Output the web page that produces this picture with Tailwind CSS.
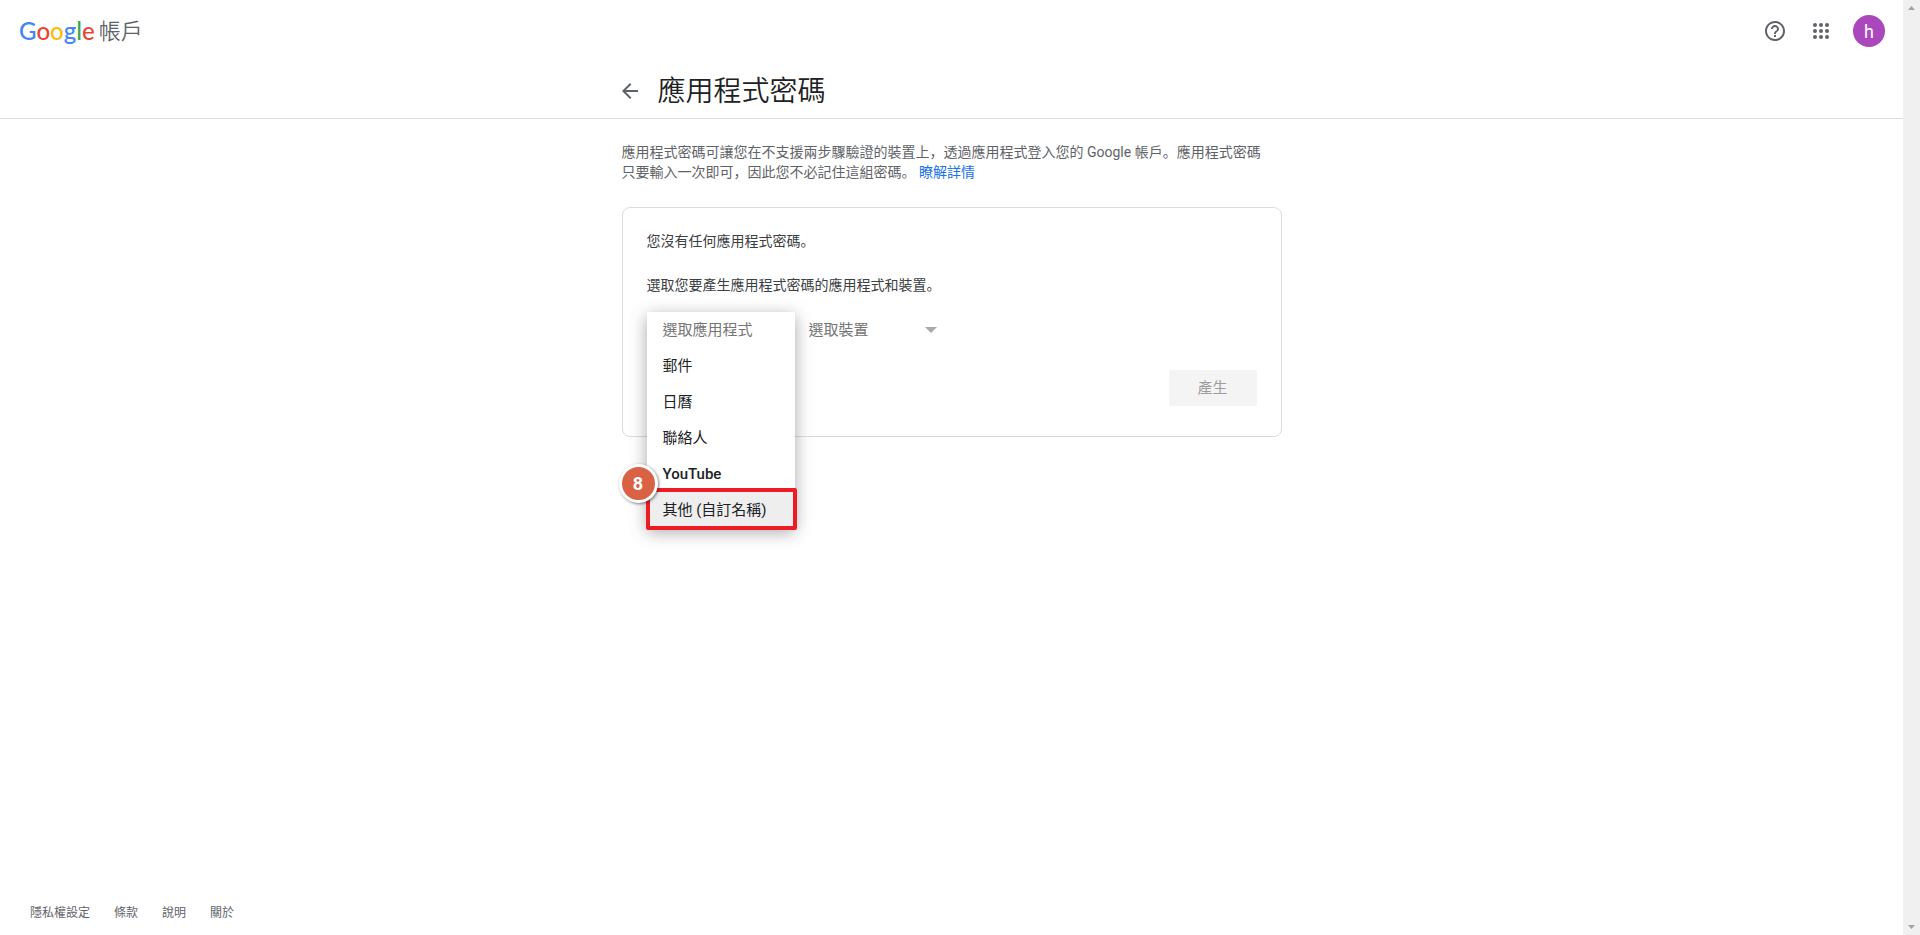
<!DOCTYPE html>
<html lang="zh-Hant">
<head>
  <meta charset="UTF-8" />
  <meta name="viewport" content="width=device-width, initial-scale=1.0" />
  <title>應用程式密碼</title>
  <script src="https://cdn.jsdelivr.net/npm/@tailwindcss/browser@4"></script>
</head>
<body class="flex min-h-screen bg-white font-[Roboto,'Noto_Sans_CJK_TC',sans-serif] text-sm text-[#3c4043]">
  <div class="flex min-h-screen min-w-0 flex-1 flex-col">
    <!-- Top bar -->
    <header class="flex h-[62px] items-center justify-between pl-[19px] pr-[18px]">
      <a href="#" class="flex items-center gap-1">
        <span class="font-[Lato,sans-serif] text-2xl leading-8 font-medium"><span class="text-[#4285f4]">G</span><span class="text-[#ea4335]">o</span><span class="text-[#fbbc05]">o</span><span class="text-[#4285f4]">g</span><span class="text-[#34a853]">l</span><span class="text-[#ea4335]">e</span></span>
        <span class="pt-0.5 text-[22px] leading-8 font-[350] text-[#5f6368]">帳戶</span>
      </a>
      <div class="flex items-center">
        <button aria-label="說明" class="mr-[22px] size-6">
          <svg viewBox="0 0 24 24" class="size-6" fill="#5f6368"><path d="M11 18h2v-2h-2v2zm1-16C6.48 2 2 6.48 2 12s4.48 10 10 10 10-4.48 10-10S17.52 2 12 2zm0 18c-4.41 0-8-3.59-8-8s3.59-8 8-8 8 3.59 8 8-3.59 8-8 8zm0-14c-2.21 0-4 1.79-4 4h2c0-1.1.9-2 2-2s2 .9 2 2c0 2-3 1.75-3 5h2c0-2.25 3-2.5 3-5 0-2.21-1.79-4-4-4z"/></svg>
        </button>
        <button aria-label="Google 應用程式" class="mr-5 size-6">
          <svg viewBox="0 0 24 24" class="size-6" fill="#5f6368"><circle cx="6" cy="6" r="2"/><circle cx="12" cy="6" r="2"/><circle cx="18" cy="6" r="2"/><circle cx="6" cy="12" r="2"/><circle cx="12" cy="12" r="2"/><circle cx="18" cy="12" r="2"/><circle cx="6" cy="18" r="2"/><circle cx="12" cy="18" r="2"/><circle cx="18" cy="18" r="2"/></svg>
        </button>
        <button class="size-8 rounded-full bg-[#ab47bc] pt-0.5 text-lg leading-7 text-white">h</button>
      </div>
    </header>

    <!-- Page title -->
    <div class="border-b border-[#dadce0]">
      <div class="mx-auto flex h-14 max-w-[660px] items-center pt-0.5">
        <button aria-label="返回" class="-ml-1 mr-4 size-6">
          <svg viewBox="0 0 24 24" class="size-6" fill="#5f6368"><path d="M20 11H7.83l5.59-5.59L12 4l-8 8 8 8 1.41-1.41L7.83 13H20v-2z"/></svg>
        </button>
        <h1 class="pt-0.5 text-[28px] leading-9 font-[350] text-[#202124]">應用程式密碼</h1>
      </div>
    </div>

    <main class="mx-auto w-full max-w-[660px] flex-1 pt-[23px]">
      <p lang="zh-Hans" class="font-[Roboto,'Noto_Sans_CJK_SC',sans-serif] leading-5 text-[#5f6368]">
        應用程式密碼可讓您在不支援兩步驟驗證的裝置上，透過應用程式登入您的 Google 帳戶。應用程式密碼<br />只要輸入一次即可，因此您不必記住這組密碼。
        <a href="#" class="text-[#1a73e8]">瞭解詳情</a>
      </p>

      <section class="mt-[25px] rounded-lg border border-[#dadce0] px-6 pt-[23px] pb-[30px]">
        <div lang="zh-Hans" class="space-y-6 font-[Roboto,'Noto_Sans_CJK_SC',sans-serif] leading-5">
          <p>您沒有任何應用程式密碼。</p>
          <p>選取您要產生應用程式密碼的應用程式和裝置。</p>
        </div>

        <div class="mt-[17px] flex gap-3.5 text-[15px] text-[#757575]">
          <div class="relative w-[148px]">
            <select aria-label="選取應用程式" class="h-9 w-full appearance-none px-4 pt-0.5">
              <option>選取應用程式</option>
            </select>
            <!-- Open menu -->
            <div role="listbox" class="absolute top-0 left-0 flex w-full flex-col bg-white text-[#202124] shadow-[0_4px_16px_rgba(0,0,0,0.35)]">
              <button role="option" class="h-9 px-4 pt-0.5 text-left text-[#757575]">選取應用程式</button>
              <button role="option" class="h-9 px-4 pt-0.5 text-left">郵件</button>
              <button role="option" class="h-9 px-4 pt-0.5 text-left">日曆</button>
              <button role="option" class="h-9 px-4 pt-0.5 text-left">聯絡人</button>
              <button role="option" class="h-9 px-4 pt-0.5 text-left font-medium">YouTube</button>
              <button role="option" aria-selected="true" class="h-9 bg-[#eeeeee] px-4 pt-0.5 text-left whitespace-nowrap">其他 (自訂名稱)</button>
              <div class="absolute -right-0.5 -bottom-0.5 -left-px h-[42px] rounded-xs border-4 border-[#ed1c24]"></div>
              <span class="absolute bottom-[25px] -left-7 flex size-[39px] items-center justify-center rounded-full border-3 border-white bg-[#d96244] text-lg font-bold text-white shadow-[1px_1px_3px_rgba(0,0,0,0.5)]">8</span>
            </div>
          </div>
          <div class="relative w-[132px]">
            <select aria-label="選取裝置" class="h-9 w-full appearance-none pt-0.5">
              <option>選取裝置</option>
            </select>
            <svg viewBox="0 0 12 6" class="pointer-events-none absolute top-[15px] right-1 h-1.5 w-3" fill="#aaaaaa"><path d="M0 0h12L6 6z"/></svg>
          </div>
        </div>

        <div class="mt-[22px] flex justify-end">
          <button disabled class="h-9 w-[88px] rounded-xs bg-[#f4f4f4] pt-0.5 text-[15px] text-[#9e9e9e]">產生</button>
        </div>
      </section>
    </main>

    <footer class="flex gap-6 px-[30px] pb-3 text-xs leading-5 text-[#5f6368]">
      <a href="#">隱私權設定</a>
      <a href="#">條款</a>
      <a href="#">說明</a>
      <a href="#">關於</a>
    </footer>
  </div>

  <!-- Scrollbar track -->
  <div aria-hidden="true" class="flex w-[17px] shrink-0 flex-col items-center justify-between bg-[#f0f0f0] py-1.5">
    <svg viewBox="0 0 7 4" class="h-1 w-[7px]" fill="#a3a3a3"><path d="M0 4h7L3.5 0z"/></svg>
    <svg viewBox="0 0 7 4" class="h-1 w-[7px]" fill="#a3a3a3"><path d="M0 0h7L3.5 4z"/></svg>
  </div>
</body>
</html>
